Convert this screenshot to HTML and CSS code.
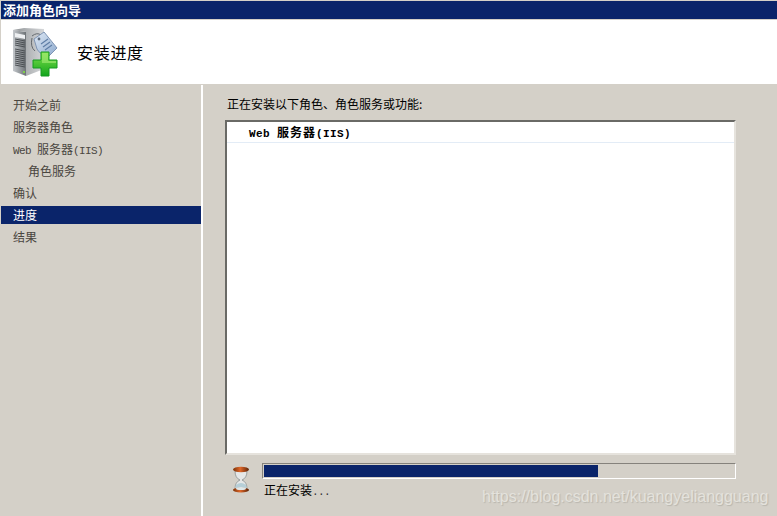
FILE: index.html
```html
<!DOCTYPE html>
<html lang="zh-CN">
<head>
    <meta charset="UTF-8">
    <title>添加角色向导</title>
    <link rel="stylesheet" href="styles.css">
</head>
<body>
    <div class="title-bar">添加角色向导</div>
    <div class="header">
        <svg class="header-icon" width="46" height="50" viewBox="0 0 46 50">
            <defs>
                <linearGradient id="front" x1="0" y1="0" x2="1" y2="0">
                    <stop offset="0" stop-color="#c4c8cc"/>
                    <stop offset="1" stop-color="#6d7276"/>
                </linearGradient>
                <linearGradient id="side" x1="0" y1="0" x2="1" y2="0">
                    <stop offset="0" stop-color="#8f9396"/>
                    <stop offset="1" stop-color="#d6d8da"/>
                </linearGradient>
                <linearGradient id="tag" x1="0" y1="0" x2="1" y2="1">
                    <stop offset="0" stop-color="#dfe9f5"/>
                    <stop offset="1" stop-color="#8eabcf"/>
                </linearGradient>
                <linearGradient id="plus" x1="0" y1="0" x2="0" y2="1">
                    <stop offset="0" stop-color="#7fe04a"/>
                    <stop offset="1" stop-color="#12a51c"/>
                </linearGradient>
            </defs>
            <path d="M0 3 L13 5 L13 49 L0 44 Z" fill="url(#front)"/>
            <path d="M0 3 L11 1 L31 2 L31 42 L13 49 L13 5 Z" fill="url(#side)"/>
            <path d="M2 6 L12 8 L12 12 L2 10 Z" fill="#eef0f2"/>
            <path d="M2 12 L12 14 M2 14 L12 16 M2 16 L12 18 M2 18 L12 20 M2 22 L12 24 M2 24 L12 26 M2 26 L12 28 M2 28 L12 30 M2 30 L12 32 M2 32 L12 34 M2 34 L12 36 M2 36 L12 38 M2 38 L12 40" stroke="#4c5054" stroke-width="1"/>
            <rect x="10" y="44" width="2" height="2" fill="#7ed04a"/>
            <path d="M19 11 Q17 20 22 24 M19 9 Q24 5 28 8" fill="none" stroke="#64696e" stroke-width="1"/>
            <path d="M21 12 L31 5 L44 21 L36 29 Q27 28 24 22 Z" fill="url(#tag)" stroke="#7f95b4" stroke-width="1"/>
            <circle cx="26" cy="12" r="1.4" fill="#5c6a7c"/>
            <path d="M28 17 L35 12 M30 20 L37 15 M32 23 L39 18" stroke="#5f7ea6" stroke-width="1.2"/>
            <path d="M28 25 H36 V33 H44 V41 H36 V49 H28 V41 H20 V33 H28 Z" fill="url(#plus)" stroke="#149a20" stroke-width="1"/>
            <path d="M29 26 H35 V34 H43 V36 H29 Z" fill="#a6ec78" opacity="0.6"/>
        </svg>
        <span class="header-title">安装进度</span>
    </div>
    <div class="main">
        <div class="sidebar">
            <div class="step">开始之前</div>
            <div class="step">服务器角色</div>
            <div class="step"><span class="latin">Web </span>服务器<span class="latin">(IIS)</span></div>
            <div class="step sub">角色服务</div>
            <div class="step">确认</div>
            <div class="step active">进度</div>
            <div class="step">结果</div>
        </div>
        <div class="content">
            <div class="intro">正在安装以下角色、角色服务或功能:</div>
            <div class="list">
                <div class="list-row"><span class="latin">Web </span>服务器<span class="latin">(IIS)</span></div>
            </div>
            <div class="status">
                <svg class="hourglass" width="18" height="27" viewBox="0 0 18 27">
                    <defs>
                        <linearGradient id="cap" x1="0" y1="0" x2="1" y2="0">
                            <stop offset="0" stop-color="#7a3208"/>
                            <stop offset="0.45" stop-color="#e0682a"/>
                            <stop offset="1" stop-color="#5c2408"/>
                        </linearGradient>
                    </defs>
                    <path d="M3 5 Q3 12 8 14 Q3 16 3 23 H15 Q15 16 10 14 Q15 12 15 5 Z" fill="#e6e8e8" stroke="#9aa0a0" stroke-width="1"/>
                    <path d="M4 19 Q9 15 14 19 L15 23 H3 Z" fill="#b6cfd8"/>
                    <ellipse cx="9" cy="3.5" rx="8" ry="2.8" fill="url(#cap)"/>
                    <ellipse cx="9" cy="24" rx="8" ry="2.4" fill="url(#cap)"/>
                    <ellipse cx="9" cy="22.5" rx="5" ry="1.6" fill="#dfe8ea"/>
                </svg>
                <div class="status-right">
                    <div class="progress"><div class="progress-fill" style="width: 71%"></div></div>
                    <div class="status-text">正在安装<span class="latin dots">...</span></div>
                </div>
            </div>
        </div>
    </div>
    <div class="watermark">https://blog.csdn.net/kuangyeliangguang</div>
</body>
</html>
```

FILE: styles.css
```css
html, body {
    height: 100%;
}
body {
    margin: 0;
    height: 516px;
    overflow: hidden;
    box-sizing: border-box;
    padding: 1px 0 0 1px;
    display: flex;
    flex-direction: column;
    position: relative;
    background-color: #d4d0c8;
    color: #000;
    font-family: "Noto Sans CJK SC", sans-serif;
    font-size: 12px;
}
.latin {
    font-family: "Liberation Mono", monospace;
    font-size: 11px;
    letter-spacing: -0.6px;
    white-space: pre;
}
.title-bar {
    height: 18px;
    line-height: 18px;
    padding-left: 2px;
    background-color: #0a246a;
    color: #fff;
    font-size: 13px;
    font-weight: bold;
    border-bottom: 1px solid #d4d0c8;
}
.header {
    height: 64px;
    box-sizing: border-box;
    padding-bottom: 1px;
    background-color: #fff;
    display: flex;
    align-items: center;
    flex-shrink: 0;
}
.header-icon {
    margin-left: 12px;
    flex-shrink: 0;
}
.header-title {
    margin-left: 18px;
    font-size: 16px;
    letter-spacing: 0.7px;
}
.main {
    flex: 1;
    display: flex;
    margin-top: 1px;
}
.sidebar {
    width: 200px;
    padding-top: 11px;
    border-right: 2px solid #fff;
    color: #4a4640;
    flex-shrink: 0;
}
.step {
    height: 18px;
    line-height: 18px;
    padding-left: 12px;
    margin-bottom: 4px;
}
.step.sub {
    padding-left: 27px;
}
.step.active {
    background-color: #0a246a;
    color: #fff;
}
.content {
    flex: 1;
    padding: 10px 41px 0 22px;
    display: flex;
    flex-direction: column;
}
.intro {
    height: 18px;
    line-height: 18px;
    margin-bottom: 7px;
    padding-left: 2px;
}
.list {
    height: 335px;
    box-sizing: border-box;
    background-color: #fff;
    border: 2px solid;
    border-color: #6a6a66 #e6e3dd #e6e3dd #6a6a66;
}
.list-row {
    height: 20px;
    line-height: 20px;
    padding-left: 22px;
    font-weight: bold;
    letter-spacing: 1px;
    border-bottom: 1px solid #e3ecf6;
}
.list-row .latin {
    letter-spacing: 0.4px;
}
.status {
    display: flex;
    margin-top: 8px;
}
.hourglass {
    margin-left: 7px;
    margin-top: 3px;
    flex-shrink: 0;
}
.status-right {
    flex: 1;
    margin-left: 12px;
}
.progress {
    height: 16px;
    box-sizing: border-box;
    border: 1px solid;
    border-color: #85827c #fff #fff #85827c;
    padding: 1px 0 1px 1px;
}
.progress-fill {
    height: 100%;
    background-color: #0a246a;
}
.status-text {
    margin-top: 2px;
    margin-left: 2px;
    line-height: 18px;
}
.dots {
    color: #333;
}
.watermark {
    position: absolute;
    left: 482px;
    top: 488px;
    font-family: "Liberation Sans", sans-serif;
    font-size: 16px;
    color: #e4e2dc;
    text-shadow: 1px 1px 1px #b9b6ae;
}
```
